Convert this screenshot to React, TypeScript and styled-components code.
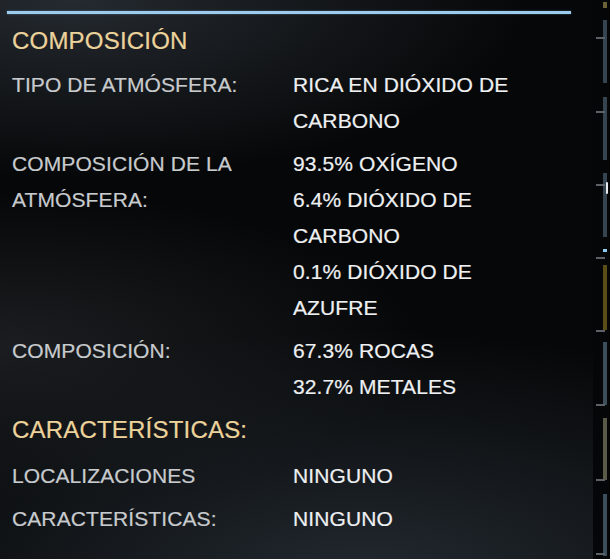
import React from "react";
import styled, { createGlobalStyle } from "styled-components";

const GlobalStyle = createGlobalStyle`
  html, body { margin: 0; padding: 0; background: #050607; }
  body { font-family: "Liberation Sans", Arial, sans-serif; }
`;

const Screen = styled.div`
  width: 610px;
  height: 559px;
  overflow: hidden;
  display: flex;
  background:
    radial-gradient(ellipse 75% 32% at 12% 0%, rgba(42, 48, 55, 0.85), rgba(42, 48, 55, 0) 100%),
    radial-gradient(ellipse 95% 45% at 60% 104%, rgba(36, 43, 50, 0.95), rgba(36, 43, 50, 0) 100%),
    radial-gradient(ellipse 70% 28% at 0% 62%, rgba(32, 35, 38, 0.8), rgba(32, 35, 38, 0) 100%),
    #060708;
`;

const Content = styled.div`
  flex: 1;
  padding: 11px 0 0 7px;
  display: flex;
  flex-direction: column;
`;

const TopRule = styled.div`
  width: 564px;
  height: 3px;
  background: #9ccbee;
  box-shadow: 0 0 2px rgba(140, 200, 240, 0.5);
  margin-bottom: 9px;
`;

const Section = styled.section`
  padding-left: 5px;
  display: flex;
  flex-direction: column;
  gap: 7px;
  margin-bottom: 7px;
`;

const Heading = styled.h2<{ $after: number }>`
  margin: 0 0 ${(p) => p.$after}px 0;
  font-weight: 400;
  font-size: 24px;
  line-height: 36px;
  color: #ecd39b;
  letter-spacing: 0.2px;
  -webkit-text-stroke: 0.2px #ecd39b;
`;

const Row = styled.div`
  display: grid;
  grid-template-columns: 281px 1fr;
  font-size: 21px;
  line-height: 36px;
  letter-spacing: 0.1px;
`;

const Label = styled.div`
  color: #c8cbce;
  width: 250px;
  -webkit-text-stroke: 0.2px #c8cbce;
`;

const Values = styled.div`
  color: #eef0f2;
  display: flex;
  flex-direction: column;
  -webkit-text-stroke: 0.2px #eef0f2;
`;

const Rail = styled.div`
  width: 14px;
  background: #050607;
  display: flex;
  flex-direction: column;
  align-items: flex-end;
  padding-right: 3px;
`;

const Segment = styled.div<{ $h: number; $mt: number; $color: string; $tick?: number }>`
  position: relative;
  width: 4px;
  height: ${(p) => p.$h}px;
  margin-top: ${(p) => p.$mt}px;
  background: ${(p) => p.$color};
  &::before {
    content: "";
    display: ${(p) => (p.$tick === undefined ? "none" : "block")};
    position: absolute;
    left: -7px;
    top: ${(p) => p.$tick ?? 0}px;
    width: 9px;
    height: 2px;
    background: #5b6166;
  }
`;

const Glint = styled.div`
  position: absolute;
  right: -1px;
  top: 9px;
  width: 2px;
  height: 12px;
  background: #e8ecef;
  border-radius: 1px;
`;

type RowData = { label: string; values: string[] };

const sections: { title: string; after: number; rows: RowData[] }[] = [
  {
    title: "COMPOSICIÓN",
    after: 1,
    rows: [
      { label: "TIPO DE ATMÓSFERA:", values: ["RICA EN DIÓXIDO DE", "CARBONO"] },
      {
        label: "COMPOSICIÓN DE LA ATMÓSFERA:",
        values: ["93.5% OXÍGENO", "6.4% DIÓXIDO DE", "CARBONO", "0.1% DIÓXIDO DE", "AZUFRE"],
      },
      { label: "COMPOSICIÓN:", values: ["67.3% ROCAS", "32.7% METALES"] },
    ],
  },
  {
    title: "CARACTERÍSTICAS:",
    after: 3,
    rows: [
      { label: "LOCALIZACIONES", values: ["NINGUNO"] },
      { label: "CARACTERÍSTICAS:", values: ["NINGUNO"] },
    ],
  },
];

export default function App() {
  return (
    <>
      <GlobalStyle />
      <Screen>
        <Content>
          <TopRule />
          {sections.map((s) => (
            <Section key={s.title}>
              <Heading $after={s.after}>{s.title}</Heading>
              {s.rows.map((r) => (
                <Row key={r.label}>
                  <Label>{r.label}</Label>
                  <Values>
                    {r.values.map((v, i) => (
                      <span key={i}>{v}</span>
                    ))}
                  </Values>
                </Row>
              ))}
            </Section>
          ))}
        </Content>
        <Rail>
          <Segment $h={6} $mt={2} $color="#6a6236" />
          <Segment $h={63} $mt={12} $color="#36444f" $tick={17} />
          <Segment $h={63} $mt={14} $color="#36444f" $tick={14} />
          <Segment $h={64} $mt={13} $color="#36444f" $tick={11}>
            <Glint />
          </Segment>
          <Segment $h={3} $mt={12} $color="#8ccbf0" $tick={8} />
          <Segment $h={65} $mt={13} $color="#5a4d16" $tick={65} />
          <Segment $h={63} $mt={12} $color="#3d4e5b" $tick={62} />
          <Segment $h={62} $mt={13} $color="#5a5a49" $tick={61} />
          <Segment $h={62} $mt={14} $color="#3d4e5b" $tick={59} />
        </Rail>
      </Screen>
    </>
  );
}
